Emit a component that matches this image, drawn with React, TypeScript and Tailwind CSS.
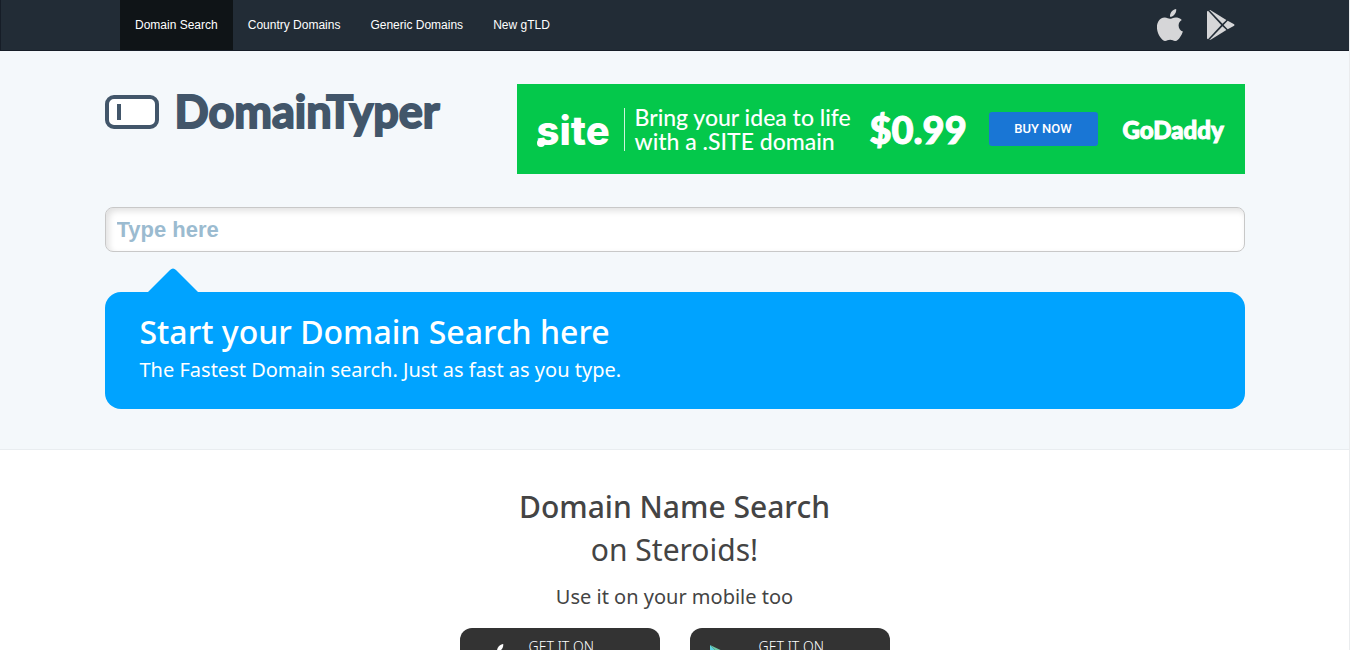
const navItems = [
  { label: "Domain Search", href: "#domain-search", active: true },
  { label: "Country Domains", href: "#country-domains", active: false },
  { label: "Generic Domains", href: "#generic-domains", active: false },
  { label: "New gTLD", href: "#new-gtld", active: false },
];

function AppleIcon({ className }: { className?: string }) {
  return (
    <svg viewBox="0 0 26 32" className={className} fill="currentColor" aria-hidden="true">
      <path d="M19.2 0c.3 2.100-.5 4-1.700 5.500-1.200 1.400-2.900 2.400-4.500 2.300-.3-2 .6-4 1.700-5.300C15.900 1.100 17.800.1 19.200 0z" />
      <path d="M24.800 10.900c-2 1.200-3.200 3-3.200 5.500 0 2.900 1.700 5.100 4.300 6.100-.6 1.900-1.600 3.900-2.900 5.700-1.300 1.900-2.700 3.800-4.800 3.800-2 0-2.700-1.200-5-1.200-2.400 0-3.200 1.200-5.100 1.200-2.100.1-3.700-2-5-3.900C.3 24.200-1.500 17.100 1.300 12.400c1.400-2.400 3.800-3.900 6.500-3.900 2.100 0 3.900 1.300 5.200 1.300 1.200 0 3.500-1.600 6.100-1.400 1.100 0 4 .4 5.700 2.500z" />
    </svg>
  );
}

function PlayIcon({ className }: { className?: string }) {
  return (
    <svg viewBox="0 0 28 30" className={className} fill="currentColor" aria-hidden="true">
      <path d="M0 1.500v27l1 .7L14.200 15 1 .8z" />
      <path d="M2.300 0 15.500 13.700 19.400 9.900 4 .4C3.400.1 2.800-.1 2.300 0z" />
      <path d="M2.300 30 15.500 16.300 19.400 20.100 4 29.600c-.6.3-1.200.5-1.700.4z" />
      <path d="M20.700 10.700 16.600 15l4.100 4.300 6-3.300c1.100-.6 1.100-1.500 0-2.100z" />
    </svg>
  );
}

function PlayColorIcon({ className }: { className?: string }) {
  return (
    <svg viewBox="0 0 28 30" className={className} aria-hidden="true">
      <path fill="#5bd3e0" d="M0 1v28l14-14z" />
      <path fill="#6fc7a5" d="M0 1 14 15l5-5z" />
      <path fill="#e2574c" d="M0 29 14 15l5 5z" />
      <path fill="#f4c63d" d="M19 10l-5 5 5 5 9-5z" />
    </svg>
  );
}

function Header() {
  return (
    <header className="border-b border-l border-[#161d27] bg-[#222c36]">
      <div className="mx-auto flex max-w-[1140px] items-center justify-between px-[15px]">
        <nav className="flex">
          {navItems.map((item) => (
            <a
              key={item.label}
              href={item.href}
              className={`px-[15px] text-xs leading-[50px] text-white ${
                item.active ? "bg-[#0f1417]" : "hover:bg-[#0f1417]"
              }`}
            >
              {item.label}
            </a>
          ))}
        </nav>
        <div className="-mr-[5px] flex gap-6 pb-px text-[#d6d6d8]">
          <a href="#ios" aria-label="iOS app">
            <AppleIcon className="h-8 w-[26px]" />
          </a>
          <a href="#android" aria-label="Android app">
            <PlayIcon className="h-8 w-7" />
          </a>
        </div>
      </div>
    </header>
  );
}

function Logo() {
  return (
    <a href="#home" className="flex items-center gap-4 text-[#42566a]">
      <svg viewBox="0 0 54 34" className="h-[34px] w-[54px]" aria-hidden="true">
        <rect x="2" y="2" width="50" height="30" rx="7" fill="#fff" stroke="currentColor" strokeWidth="4" />
        <path d="M14 9v16" stroke="currentColor" strokeWidth="4" />
      </svg>
      <span className="font-[Lato,sans-serif] text-[45px] leading-[55px] font-bold [-webkit-text-stroke:2px_#42566a]">
        DomainTyper
      </span>
    </a>
  );
}

function AdBanner() {
  return (
    <div className="flex h-[90px] w-[728px] items-center bg-[#04c84b] pl-5 whitespace-nowrap text-white">
      <div className="relative w-[87px] shrink-0 pt-1 font-[Inter,sans-serif] text-[40px] leading-[48px] font-extrabold">
        site
        <span className="absolute bottom-2 left-0 size-2 rounded-full bg-white" />
      </div>
      <div className="h-[43px] w-px bg-white/80" />
      <p className="w-[245px] shrink-0 pl-2.5 font-[Lato,sans-serif] text-[23px] leading-6 font-medium">
        Bring your idea to life
        <br />
        with a .SITE domain
      </p>
      <div className="w-[119px] shrink-0 font-[Lato,sans-serif] text-[38px] leading-[44px] font-black [-webkit-text-stroke:1px_white]">
        $0.99
      </div>
      <button
        type="button"
        className="h-[34px] w-[109px] shrink-0 rounded-[3px] bg-[#1976d5] font-[Roboto,sans-serif] text-[13px] font-medium"
      >
        BUY NOW
      </button>
      <div className="pt-0.5 pl-[25px] font-[Lato,sans-serif] text-2xl leading-7 font-black [-webkit-text-stroke:1px_white]">
        GoDaddy
      </div>
    </div>
  );
}

function SearchPanel() {
  return (
    <section className="border-b border-[#e9edf0] bg-[#f4f8fb] px-4 pt-[33px] pb-10">
      <div className="mx-auto max-w-[1140px]">
        <div className="flex items-start justify-between">
          <Logo />
          <AdBanner />
        </div>
        <input
          type="text"
          aria-label="Domain name"
          placeholder="Type here"
          className="mt-[33px] block h-[45px] w-full rounded-lg border border-[#c8c8c8] bg-white px-[11px] text-[22px] font-bold text-[#42566a] shadow-[inset_3px_3px_6px_rgba(0,0,0,0.12)] outline-none placeholder:text-[#9bbbd0]"
        />
        <div className="mt-4">
          <svg viewBox="0 0 52 24" className="ml-[42px] block h-6 w-[52px]" aria-hidden="true">
            <path d="M1 24 23 2Q26-1 29 2L51 24z" fill="#00a3ff" />
          </svg>
          <div className="rounded-2xl bg-[#00a3ff] px-[35px] pt-[17px] pb-6 font-['Noto_Sans',sans-serif] text-white">
            <h2 className="text-[32px] leading-[46px] font-medium">Start your Domain Search here</h2>
            <p className="text-xl leading-[30px]">The Fastest Domain search. Just as fast as you type.</p>
          </div>
        </div>
      </div>
    </section>
  );
}

function MobilePromo() {
  return (
    <section className="h-[200px] overflow-hidden bg-white pt-[35px] text-center font-['Noto_Sans',sans-serif] text-[#444]">
      <h1 className="text-[30px] leading-[43px] font-medium">
        Domain Name Search
        <br />
        <span className="font-normal">on Steroids!</span>
      </h1>
      <p className="mt-[9px] text-xl leading-[34px]">Use it on your mobile too</p>
      <div className="mt-3.5 flex justify-center gap-[30px]">
        <a href="#app-store" className="flex h-16 w-[200px] rounded-xl bg-[#333] pt-2 pl-6 text-left text-white">
          <AppleIcon className="mt-2 h-8 w-[26px]" />
          <span className="pt-px pl-[19px] text-sm leading-5 font-light">
            GET IT ON
            <br />
            App Store
          </span>
        </a>
        <a href="#google-play" className="flex h-16 w-[200px] rounded-xl bg-[#333] pt-2 pl-5 text-left text-white">
          <PlayColorIcon className="mt-2 h-[30px] w-7" />
          <span className="pt-px pl-[21px] text-sm leading-5 font-light">
            GET IT ON
            <br />
            Google Play
          </span>
        </a>
      </div>
    </section>
  );
}

export default function App() {
  return (
    <div className="border-r border-[#eaecee] bg-white font-['Liberation_Sans',Arial,sans-serif]">
      <Header />
      <main>
        <SearchPanel />
        <MobilePromo />
      </main>
    </div>
  );
}
